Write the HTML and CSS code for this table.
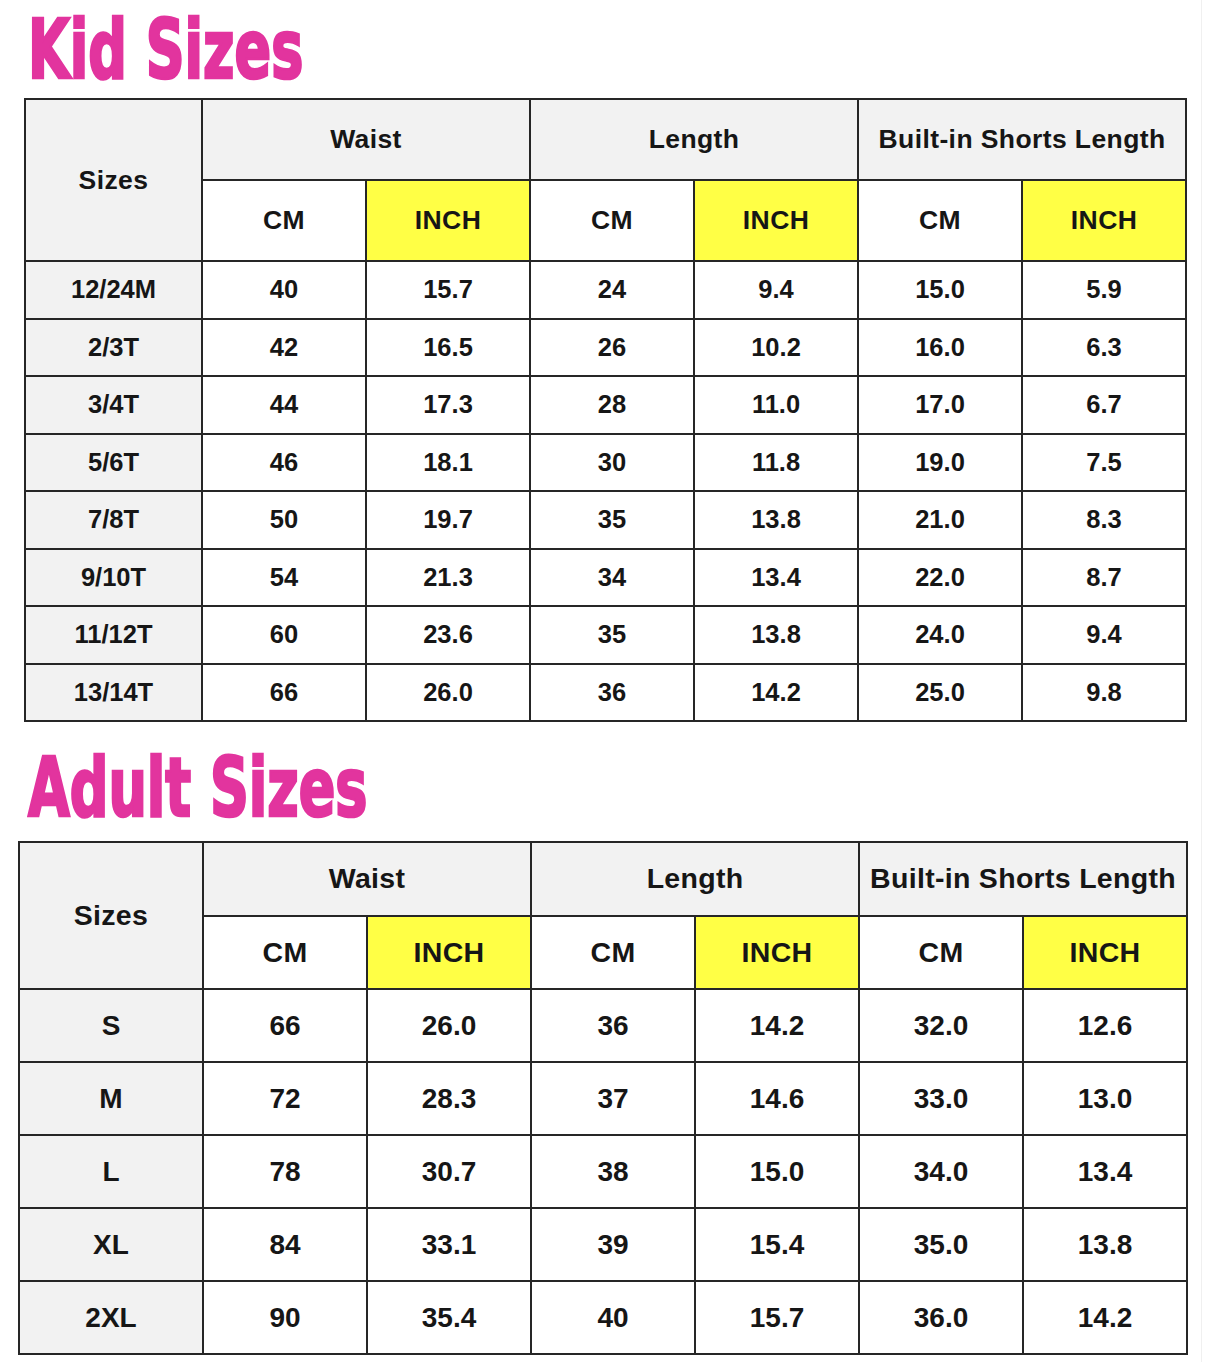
FILE: index.html
```html
<!DOCTYPE html>
<html>
<head>
<meta charset="utf-8">
<link rel="stylesheet" href="styles.css">
</head>
<body>
<div class="page">
  <div class="title title-kid"><span class="title-text">Kid Sizes</span></div>
  <table class="chart chart-kid">
    <colgroup><col class="c-size"><col><col><col><col><col><col></colgroup>
    <tr class="h1">
      <td class="grey" rowspan="2">Sizes</td>
      <td class="grey" colspan="2">Waist</td>
      <td class="grey" colspan="2">Length</td>
      <td class="grey" colspan="2">Built-in Shorts Length</td>
    </tr>
    <tr class="h2">
      <td>CM</td><td class="yel">INCH</td>
      <td>CM</td><td class="yel">INCH</td>
      <td>CM</td><td class="yel">INCH</td>
    </tr>
    <tr><td class="grey">12/24M</td><td>40</td><td>15.7</td><td>24</td><td>9.4</td><td>15.0</td><td>5.9</td></tr>
    <tr><td class="grey">2/3T</td><td>42</td><td>16.5</td><td>26</td><td>10.2</td><td>16.0</td><td>6.3</td></tr>
    <tr><td class="grey">3/4T</td><td>44</td><td>17.3</td><td>28</td><td>11.0</td><td>17.0</td><td>6.7</td></tr>
    <tr><td class="grey">5/6T</td><td>46</td><td>18.1</td><td>30</td><td>11.8</td><td>19.0</td><td>7.5</td></tr>
    <tr><td class="grey">7/8T</td><td>50</td><td>19.7</td><td>35</td><td>13.8</td><td>21.0</td><td>8.3</td></tr>
    <tr><td class="grey">9/10T</td><td>54</td><td>21.3</td><td>34</td><td>13.4</td><td>22.0</td><td>8.7</td></tr>
    <tr><td class="grey">11/12T</td><td>60</td><td>23.6</td><td>35</td><td>13.8</td><td>24.0</td><td>9.4</td></tr>
    <tr><td class="grey">13/14T</td><td>66</td><td>26.0</td><td>36</td><td>14.2</td><td>25.0</td><td>9.8</td></tr>
  </table>

  <div class="title title-adult"><span class="title-text">Adult Sizes</span></div>
  <table class="chart chart-adult">
    <colgroup><col class="c-size"><col><col><col><col><col><col></colgroup>
    <tr class="h1">
      <td class="grey" rowspan="2">Sizes</td>
      <td class="grey" colspan="2">Waist</td>
      <td class="grey" colspan="2">Length</td>
      <td class="grey" colspan="2">Built-in Shorts Length</td>
    </tr>
    <tr class="h2">
      <td>CM</td><td class="yel">INCH</td>
      <td>CM</td><td class="yel">INCH</td>
      <td>CM</td><td class="yel">INCH</td>
    </tr>
    <tr><td class="grey">S</td><td>66</td><td>26.0</td><td>36</td><td>14.2</td><td>32.0</td><td>12.6</td></tr>
    <tr><td class="grey">M</td><td>72</td><td>28.3</td><td>37</td><td>14.6</td><td>33.0</td><td>13.0</td></tr>
    <tr><td class="grey">L</td><td>78</td><td>30.7</td><td>38</td><td>15.0</td><td>34.0</td><td>13.4</td></tr>
    <tr><td class="grey">XL</td><td>84</td><td>33.1</td><td>39</td><td>15.4</td><td>35.0</td><td>13.8</td></tr>
    <tr><td class="grey">2XL</td><td>90</td><td>35.4</td><td>40</td><td>15.7</td><td>36.0</td><td>14.2</td></tr>
  </table>
</div>
</body>
</html>
```

FILE: styles.css
```css
html, body {
  margin: 0;
  padding: 0;
  background: #ffffff;
}

.page {
  width: 1202px;
  height: 1362px;
  overflow: hidden;
  box-sizing: border-box;
  border-right: 1px solid #f0f0f0;
}

.title {
  box-sizing: border-box;
  padding-left: 28px;
  overflow: visible;
}

.title-kid {
  height: 98px;
  padding-top: 8px;
}

.title-adult {
  height: 119px;
  padding-top: 24px;
}

.title-text {
  display: inline-block;
  font-family: "DejaVu Sans Condensed", "DejaVu Sans", sans-serif;
  font-stretch: condensed;
  font-weight: bold;
  font-size: 60px;
  line-height: 60px;
  color: #e2349e;
  -webkit-text-stroke: 2px #e2349e;
  transform-origin: 0 0;
  transform: scale(1, 1.37);
  white-space: nowrap;
}

.chart {
  border-collapse: collapse;
  table-layout: fixed;
  font-family: "Liberation Sans", Arial, sans-serif;
  font-weight: bold;
  color: #161616;
  text-align: center;
}

.chart td {
  border: 2px solid #262626;
  padding: 0;
  vertical-align: middle;
  white-space: nowrap;
}

.grey {
  background: #f2f2f2;
}

.yel {
  background: #ffff45;
}

.chart-kid {
  margin-left: 24px;
  width: 1161px;
  font-size: 25.5px;
}

.chart-kid col {
  width: 164px;
}

.chart-kid col.c-size {
  width: 177px;
}

.chart-kid tr.h1 td,
.chart-kid tr.h2 td {
  height: 79px;
  font-size: 26.5px;
  letter-spacing: 0.4px;
}

.chart-kid tr td {
  height: 55.5px;
}

.chart-adult {
  margin-left: 18px;
  width: 1169px;
  font-size: 28px;
}

.chart-adult col {
  width: 164px;
}

.chart-adult col.c-size {
  width: 184px;
}

.chart-adult tr.h1 td,
.chart-adult tr.h2 td {
  height: 71.5px;
  font-size: 28.5px;
  letter-spacing: 0.3px;
}

.chart-adult tr td {
  height: 71px;
}
```
